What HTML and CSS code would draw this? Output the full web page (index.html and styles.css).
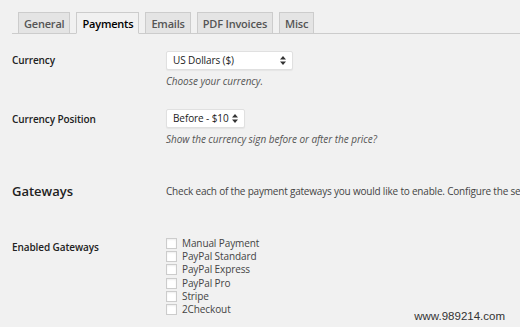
FILE: index.html
```html
<!DOCTYPE html>
<html lang="en">
<head>
    <meta charset="UTF-8">
    <title>Payment Settings</title>
    <link rel="stylesheet" href="styles.css">
</head>
<body>
    <div class="wrap">
        <nav class="nav-tabs">
            <a class="nav-tab">General</a>
            <a class="nav-tab active">Payments</a>
            <a class="nav-tab">Emails</a>
            <a class="nav-tab">PDF Invoices</a>
            <a class="nav-tab">Misc</a>
        </nav>

        <div class="form-row row-currency">
            <div class="label">Currency</div>
            <div class="field">
                <span class="select-wrap wide">
                    <span class="select-text">US Dollars ($)</span>
                    <svg class="arrows" width="6" height="9" viewBox="0 0 6 9"><path d="M3 0 L6 3.5 H0 Z M3 9 L6 5.5 H0 Z" fill="#333"/></svg>
                </span>
                <p class="description">Choose your currency.</p>
            </div>
        </div>

        <div class="form-row row-position">
            <div class="label">Currency Position</div>
            <div class="field">
                <span class="select-wrap">
                    <span class="select-text">Before - $10</span>
                    <svg class="arrows" width="6" height="9" viewBox="0 0 6 9"><path d="M3 0 L6 3.5 H0 Z M3 9 L6 5.5 H0 Z" fill="#333"/></svg>
                </span>
                <p class="description">Show the currency sign before or after the price?</p>
            </div>
        </div>

        <div class="form-row row-heading">
            <h2 class="section-title">Gateways</h2>
            <div class="field">
                <p class="section-text">Check each of the payment gateways you would like to enable. Configure the settings for each individual gateway on their own tabs.</p>
            </div>
        </div>

        <div class="form-row row-gateways">
            <div class="label">Enabled Gateways</div>
            <div class="field">
                <ul class="gateway-list">
                    <li><input type="checkbox"> Manual Payment</li>
                    <li><input type="checkbox"> PayPal Standard</li>
                    <li><input type="checkbox"> PayPal Express</li>
                    <li><input type="checkbox"> PayPal Pro</li>
                    <li><input type="checkbox"> Stripe</li>
                    <li><input type="checkbox"> 2Checkout</li>
                </ul>
            </div>
        </div>
    </div>
    <span class="watermark">www.989214.com</span>
</body>
</html>
```

FILE: styles.css
```css
html, body {
    margin: 0;
    padding: 0;
    height: 100%;
    overflow: hidden;
}
body {
    background-color: #f1f1f1;
    font-family: 'Open Sans', 'Liberation Sans', sans-serif;
    color: #222;
    position: relative;
}
.wrap {
    padding-left: 12px;
}
.nav-tabs {
    display: flex;
    gap: 6px;
    padding: 12px 0 0 6px;
    border-bottom: 1px solid #ccc;
    height: 21px;
}
.nav-tab {
    display: block;
    height: 21px;
    box-sizing: border-box;
    padding: 0 5px;
    line-height: 21px;
    font-size: 11px;
    letter-spacing: -0.2px;
    font-weight: 600;
    color: #555;
    background-color: #e4e4e4;
    border: 1px solid #ccc;
    border-bottom: none;
    margin-bottom: -1px;
}
.nav-tab.active {
    background-color: #f1f1f1;
    color: #000;
    height: 22px;
    border-bottom: 1px solid #f1f1f1;
}
.form-row {
    display: grid;
    grid-template-columns: 154px 1fr;
    align-items: start;
}
.label {
    font-size: 10px;
    letter-spacing: -0.1px;
    line-height: 14px;
    font-weight: 600;
    color: #222;
    padding-top: 2px;
}
.field {
    min-width: 0;
}
.row-currency {
    margin-top: 17px;
}
.row-position {
    margin-top: 21px;
}
.row-position .label {
    padding-top: 3px;
}
.select-wrap {
    position: relative;
    display: inline-block;
    vertical-align: top;
    box-sizing: border-box;
    width: 79px;
    height: 19px;
    background-color: #fff;
    border: 1px solid #e0e0e0;
    border-radius: 2px;
    box-shadow: 0 1px 1px rgba(0, 0, 0, 0.05);
}
.select-wrap.wide {
    width: 127px;
}
.select-text {
    display: block;
    font-size: 10px;
    letter-spacing: -0.1px;
    line-height: 17px;
    padding-left: 6px;
    color: #222;
}
.arrows {
    position: absolute;
    right: 6px;
    top: 4px;
}
.description {
    margin: 1px 0 0;
    font-size: 10px;
    letter-spacing: -0.05px;
    font-style: italic;
    color: #555;
    line-height: 14px;
}
.row-heading {
    margin-top: 36px;
    align-items: center;
}
.section-title {
    margin: 0;
    font-size: 13px;
    line-height: 18px;
    font-weight: 600;
    color: #222;
}
.section-text {
    margin: 0;
    font-size: 10px;
    letter-spacing: -0.2px;
    line-height: 18px;
    color: #444;
    white-space: nowrap;
}
.row-gateways {
    margin-top: 37px;
}
.row-gateways .label {
    padding-top: 3px;
}
.gateway-list {
    list-style: none;
    margin: 0;
    padding: 0;
}
.gateway-list li {
    display: flex;
    align-items: center;
    height: 13.2px;
    line-height: 13px;
    font-size: 10px;
    letter-spacing: -0.1px;
    color: #444;
}
.gateway-list input {
    appearance: none;
    -webkit-appearance: none;
    width: 11px;
    height: 11px;
    margin: 0 5px 0 0;
    background-color: #fff;
    border: 1px solid #ccc;
    box-shadow: inset 0 1px 2px rgba(0, 0, 0, 0.07);
    box-sizing: border-box;
}
.watermark {
    position: absolute;
    right: 15px;
    bottom: 5px;
    font-family: 'Liberation Sans', Arial, sans-serif;
    font-size: 11.5px;
    color: #333;
}
```
